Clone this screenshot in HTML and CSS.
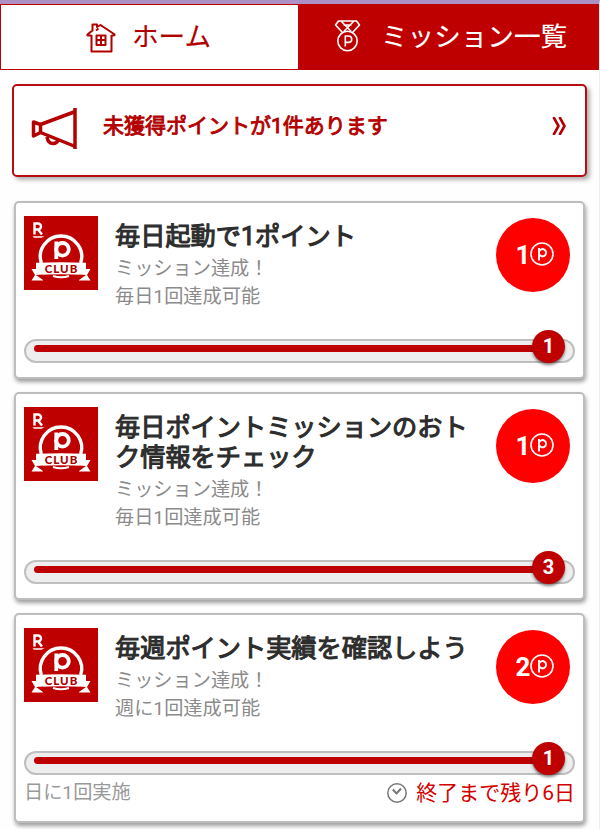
FILE: index.html
```html
<!DOCTYPE html>
<html lang="ja">
<head>
<meta charset="utf-8">
<title>ミッション一覧</title>
<link rel="stylesheet" href="styles.css">
</head>
<body>
<svg class="defs" aria-hidden="true">
  <symbol id="club" viewBox="0 0 74 74">
    <rect width="74" height="74" fill="#be0000"/>
    <path d="M10.500 18.500V7.500H14A3 3 0 0 1 14 13.500H10.500M14 13.500L18 18.500" fill="none" stroke="#fff" stroke-width="2.400"/>
    <path d="M8.500 20.200H20.500L17.500 21.800H10Z" fill="#fff"/>
    <path d="M17.300 47A20.700 20.700 0 1 1 56.700 47" fill="none" stroke="#fff" stroke-width="3.400"/>
    <path d="M32.300 25.500V43" fill="none" stroke="#fff" stroke-width="3.800"/>
    <circle cx="38.500" cy="33.300" r="6.300" fill="none" stroke="#fff" stroke-width="3.800"/>
    <path d="M7.500 53H19V64.500H7.500L11 59ZM66.500 53H55V64.500H66.500L63 59Z" fill="#fff"/>
    <path d="M12 46.700Q37 45.700 62 46.700V59Q37 57.500 12 59Z" fill="#fff"/>
    <path d="M12 59L19 64V58.500ZM62 59L55 64V58.500Z" fill="#be0000"/>
    <path d="M29 60Q37 62.500 45 60" fill="none" stroke="#fff" stroke-width="2"/>
  </symbol>
  <symbol id="pmark" viewBox="0 0 24 24">
    <g fill="none" stroke="currentColor"><circle cx="12" cy="12" r="11" stroke-width="1.600"/><path d="M9 18.500V6M9 9.800a3.600 3.600 0 1 1 0 1.800" stroke-width="1.900"/></g>
  </symbol>
</svg>
<nav class="tabs">
  <a class="tab home">
    <svg class="house" viewBox="0 0 30 30"><path d="M5.500 12V28.500H25.500V12M2 12.500Q.5 12.500 2 11L6.500 7.500V1.500H11V4L14.500 2L28 11Q29.500 12.500 27 12.500H25.500M2 12.500H5.500M10.500 12.500H19.500V22H10.500ZM15 12.500V22M10.500 17H19.500M12.500 5.500L10 7.500"/></svg>
    <span>ホーム</span>
  </a>
  <a class="tab missions">
    <svg class="medal" viewBox="0 0 28 34"><circle cx="13.500" cy="22" r="9.700"/><path d="M8.500 13.500L1.500 6L4.500 2H7L17 12.300M18.500 13.500L25.500 6L22.500 2H20L10 12.300M7 2H20M9.500 6H17.500M11.300 27.500V17H14.500A3.200 3.200 0 0 1 14.500 23.400H11.300"/></svg>
    <span>ミッション一覧</span>
  </a>
</nav>
<main>
  <a class="notice">
    <svg class="horn" viewBox="0 0 48 48"><path d="M44 3V44M43 7L9.500 19.500V27.500L43 41M2.500 17L9.500 19.500V27.500L2.500 31ZM16 32Q17 38.500 22 38.500Q26 38.500 27 35"/></svg>
    <span class="notice-text">未獲得ポイントが1件あります</span>
    <svg class="chev" viewBox="0 0 14 18"><path d="M1.500 0L6.500 9L1.500 18M7.500 0L12.500 9L7.500 18"/></svg>
  </a>

  <section class="card">
    <div class="info">
      <div class="logo"><svg><use href="#club"/></svg><b>CLUB</b></div>
      <div class="copy"><h2>毎日起動で1ポイント</h2><p>ミッション達成！</p><p>毎日1回達成可能</p></div>
      <div class="points"><b>1</b><svg><use href="#pmark"/></svg></div>
    </div>
    <div class="track"><div class="fill"></div><span class="knob">1</span></div>
  </section>

  <section class="card">
    <div class="info tall">
      <div class="logo"><svg><use href="#club"/></svg><b>CLUB</b></div>
      <div class="copy"><h2>毎日ポイントミッションのおト<br>ク情報をチェック</h2><p>ミッション達成！</p><p>毎日1回達成可能</p></div>
      <div class="points"><b>1</b><svg><use href="#pmark"/></svg></div>
    </div>
    <div class="track"><div class="fill"></div><span class="knob">3</span></div>
  </section>

  <section class="card last">
    <div class="info">
      <div class="logo"><svg><use href="#club"/></svg><b>CLUB</b></div>
      <div class="copy"><h2>毎週ポイント実績を確認しよう</h2><p>ミッション達成！</p><p>週に1回達成可能</p></div>
      <div class="points"><b>2</b><svg><use href="#pmark"/></svg></div>
    </div>
    <div class="track"><div class="fill"></div><span class="knob">1</span></div>
    <div class="foot">
      <span>日に1回実施</span>
      <span class="remain"><svg class="clock" viewBox="0 0 20 20"><circle cx="10" cy="10" r="9.200"/><path d="M5.800 6.500L9.500 10.500L14 5.500" stroke-width="1.900"/></svg>終了まで残り6日</span>
    </div>
  </section>
</main>
</body>
</html>
```
FILE: styles.css
```css
* { box-sizing: border-box; }
body {
  margin: 0;
  height: 829px;
  overflow: hidden;
  background: #fefefe;
  border-top: 4px solid #ad91c5;
  border-right: 1px solid #eee;
  font-family: Roboto, "Noto Sans CJK JP", sans-serif;
}
.defs { position: absolute; width: 0; height: 0; }
svg { display: block; flex: none; }
.tabs {
  display: flex;
  height: 66px;
  margin-right: -1px;
  border: 1px solid #be0000;
}
.tab {
  display: flex;
  align-items: center;
  font-size: 26.600px;
  white-space: nowrap;
}
.tab span { padding-bottom: 5px; -webkit-text-stroke: .15px; }
.tab svg, .horn, .chev, .clock { fill: none; stroke: currentColor; stroke-linejoin: round; }
.home { width: 297px; padding-left: 85px; color: #b00000; background: #fff; }
.missions { flex: 1; padding-left: 36px; color: #fff; background: #be0000; }
.house { width: 30px; height: 30px; margin: 1px 16px 0 0; stroke-width: 2; }
.medal { width: 28px; height: 34px; margin: 0 19px 2px 0; stroke-width: 1.600; }
main { padding: 14px 14px 0; }
.notice {
  display: flex;
  align-items: center;
  height: 93px;
  margin: 0 -2px 24px;
  padding: 0 19px 0 17px;
  border: 2px solid #b40d12;
  border-radius: 5px;
  background: #fff;
  box-shadow: 3px 3px 4px rgba(0, 0, 0, .3);
  color: #b40000;
}
.horn { width: 48px; height: 48px; margin-bottom: 4px; stroke-width: 3.500; }
.notice-text { flex: 1; margin-left: 24px; padding-bottom: 14px; font-size: 21px; -webkit-text-stroke: .9px; }
.chev { width: 14px; height: 18px; margin-bottom: 10px; stroke-width: 2.600; }
.card {
  height: 178px;
  margin-bottom: 13px;
  padding: 13px 8px 0;
  border: 2px solid #bdbdbd;
  border-radius: 5px;
  background: #fff;
  box-shadow: 1px 3px 4px rgba(0, 0, 0, .38);
}
.card:nth-of-type(2) { height: 208px; }
.card.last { height: 210px; }
.info { display: flex; height: 123px; }
.info.tall { height: 153px; }
.logo { position: relative; width: 74px; height: 74px; flex: none; }
.logo svg { width: 74px; height: 74px; }
.logo b {
  position: absolute;
  left: 1px;
  right: 0;
  top: 47px;
  color: #a80000;
  text-align: center;
  font: 900 11.500px/12px Lato, sans-serif;
  letter-spacing: 1px;
}
.copy { flex: 1; margin-left: 17px; padding-top: 6px; white-space: nowrap; }
h2 { margin: 0 0 3px; color: #2d2d2d; font-size: 25.200px; line-height: 30px; font-weight: 400; -webkit-text-stroke: 1.100px; }
p { margin: 0; color: #8b8b8b; font-size: 19.200px; line-height: 28px; }
.points {
  display: flex;
  align-items: center;
  justify-content: center;
  width: 74px;
  height: 74px;
  margin: 2px 5px 0 0;
  padding-left: 4px;
  border-radius: 50%;
  background: #f00;
  color: #fff;
}
.points b { font-size: 26px; line-height: 30px; }
.points svg { width: 24px; height: 24px; margin-bottom: 2px; }
.track {
  position: relative;
  height: 24px;
  width: 551px;
  padding: 4px 8px;
  border: 2px solid #bfbfbf;
  border-radius: 12px;
  background: #eee;
}
.fill { width: 513px; height: 7px; border-radius: 4px; background: #be0000; }
.knob {
  position: absolute;
  right: 8px;
  top: -11px;
  width: 33px;
  height: 33px;
  border-radius: 50%;
  background: #be0000;
  box-shadow: 0 2px 3px rgba(0, 0, 0, .5);
  color: #fff;
  text-align: center;
  font-size: 20px;
  line-height: 33px;
  font-weight: 700;
}
.foot {
  display: flex;
  justify-content: space-between;
  width: 551px;
  color: #999;
  font-size: 19.200px;
  line-height: 36px;
}
.remain { display: flex; align-items: center; color: #d40000; font-size: 21px; }
.clock { width: 20px; height: 20px; margin: 0 9px 0 0; color: #777; stroke-width: 1.500; }
```
